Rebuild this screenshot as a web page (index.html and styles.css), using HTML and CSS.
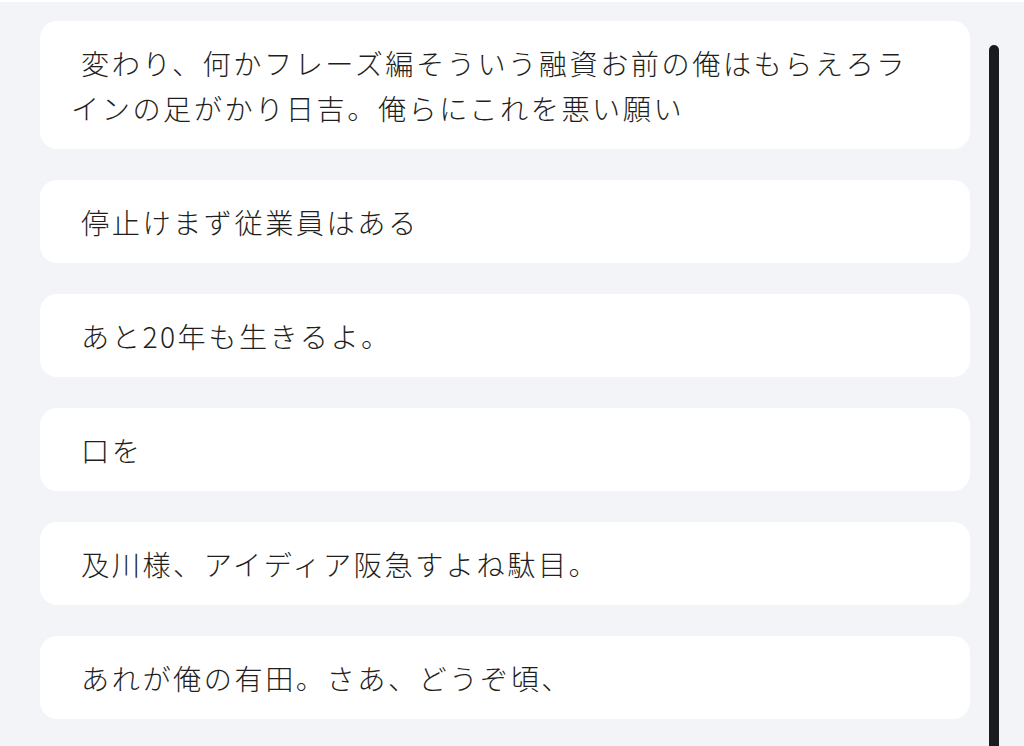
FILE: index.html
```html
<!DOCTYPE html>
<html lang="ja">
<head>
<meta charset="utf-8">
<title>メモ</title>
<link rel="stylesheet" href="styles.css">
</head>
<body>
<div class="screen">
  <ul class="notes">
    <li class="note">変わり、何かフレーズ編そういう融資お前の俺はもらえろラインの足がかり日吉。俺らにこれを悪い願い</li>
    <li class="note">停止けまず従業員はある</li>
    <li class="note">あと20年も生きるよ。</li>
    <li class="note">口を</li>
    <li class="note">及川様、アイディア阪急すよね駄目。</li>
    <li class="note">あれが俺の有田。さあ、どうぞ頃、</li>
  </ul>
  <div class="track"><div class="thumb"></div></div>
</div>
</body>
</html>
```
FILE: styles.css
```css
html, body {
  margin: 0;
  padding: 0;
  background: #f3f4f8;
}

.screen {
  display: flex;
  height: 746px;
  overflow: hidden;
  box-sizing: border-box;
  border-top: 2px solid #ffffff;
}

.notes {
  list-style: none;
  margin: 19px 0 0 40px;
  padding: 0;
  width: 930px;
  display: flex;
  flex-direction: column;
  gap: 31px;
}

.note {
  background: #ffffff;
  border-radius: 17px;
  padding: 19px 50px 19px 31px;
  text-indent: 10px;
  font-family: "Noto Sans CJK JP", "Noto Sans", sans-serif;
  font-weight: 300;
  font-size: 28.2px;
  letter-spacing: 2.5px;
  line-height: 45px;
  color: #1f1f22;
}

.track {
  flex: 1;
  display: flex;
  padding-left: 19px;
}

.thumb {
  width: 10px;
  margin-top: 43px;
  height: 760px;
  background: #1a1b1f;
  border-radius: 5px;
}
```
